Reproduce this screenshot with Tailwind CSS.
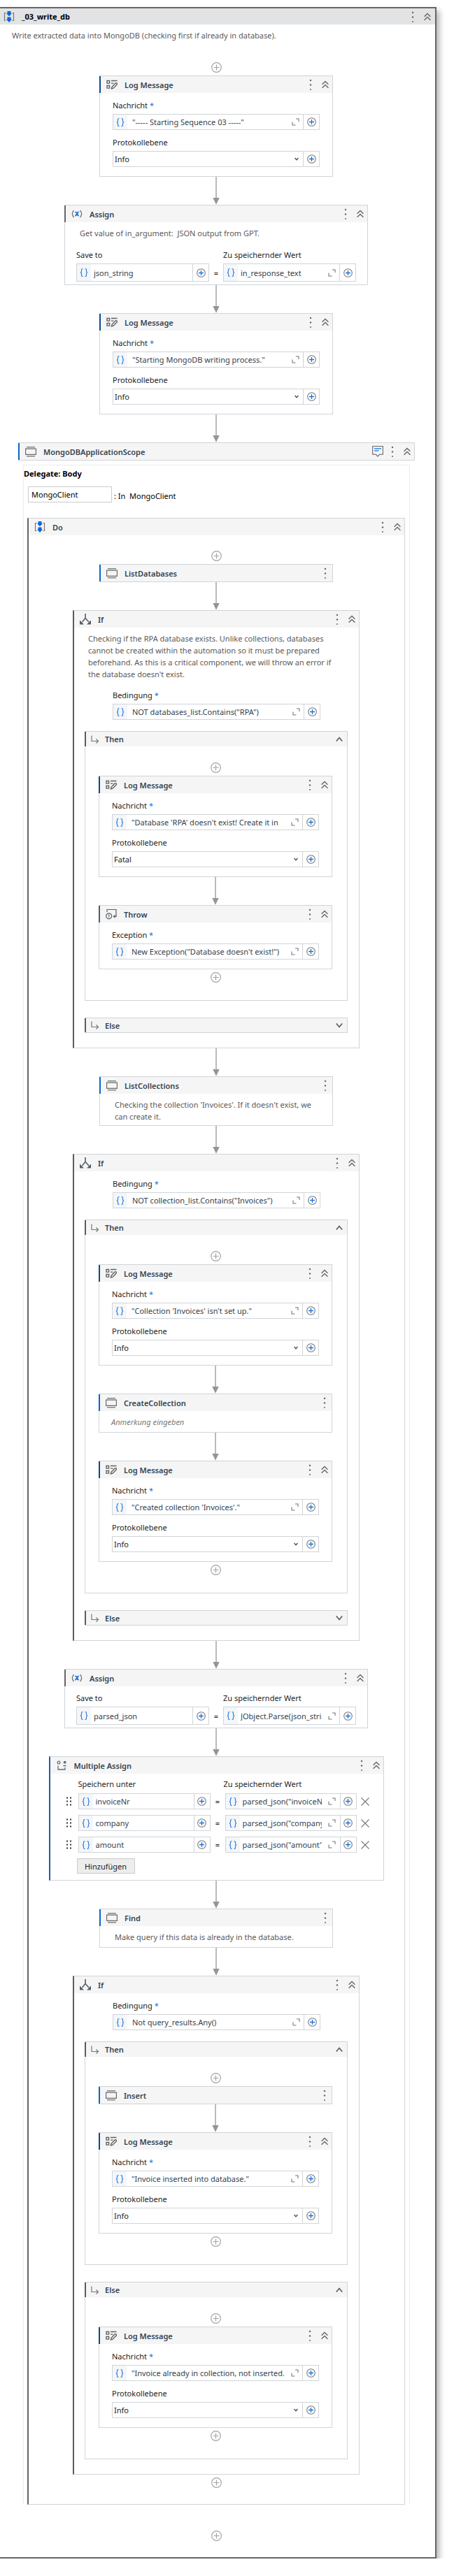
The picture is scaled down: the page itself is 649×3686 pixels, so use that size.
<!DOCTYPE html>
<html lang="de">
<head>
<meta charset="utf-8">
<meta name="viewport" content="width=device-width, initial-scale=1">
<title>_03_write_db</title>
<script src="https://cdn.jsdelivr.net/npm/@tailwindcss/browser@4"></script>
</head>
<body class="bg-white font-['Noto_Sans','Open_Sans',sans-serif] text-[11px] leading-[17px] text-[#222]">
<svg class="hidden" aria-hidden="true">
  <symbol id="i-seq" viewBox="0 0 16 16"><path d="M3.5 2.5H1.5v11h2M12.5 2.5h2v11h-2" fill="none" stroke="#777" stroke-width="1.2"/><path d="M5.5 0h5v3.200h1.500L8 7.300 4 3.200h1.500zM5.500 8.500h5v3h1.500L8 16l-4-4.500h1.500z" fill="#0b66d6"/></symbol>
  <symbol id="i-log" viewBox="0 0 16 16"><g fill="none" stroke="#616161" stroke-width="1.400"><path d="M1 2.500h3.600v3.600H1zM1 9.500h3.600v3.600H1zM7 2.500h8.500M7 6.100h3.500"/><path d="M7.500 14l.6-2.700 5-5.200q1-.8 1.900 0t.1 1.900l-5 5.200z"/></g></symbol>
  <symbol id="i-assign" viewBox="0 0 16 16"><path d="M3.500 3Q-.8 8 3.500 13M12.500 3q4.300 5 0 10" fill="none" stroke="#777" stroke-width="1.300"/><path d="M5.300 5.500h1.300q.8 0 2.800 5h1.300M10.700 5.500q-1.200-.3-2.700 2.500t-2.700 2.500" fill="none" stroke="#0b66d6" stroke-width="1.700"/></symbol>
  <symbol id="i-box" viewBox="0 0 16 16"><path d="M.6 4.200h14.800v8.100H.6z" fill="none" stroke="#6b6b6b" stroke-width="1.200"/><path d="M2 1.800h12M2 14.800h12" stroke="#858585" stroke-width="1.400"/></symbol>
  <symbol id="i-if" viewBox="0 0 16 16"><path d="M8 0v6.500L3.500 12M8 6.500l5 5.500" fill="none" stroke="#525e68" stroke-width="1.600"/><path d="M0 9.500v6h6zM16 9.500v6h-6z" fill="#525e68"/></symbol>
  <symbol id="i-throw" viewBox="0 0 16 16"><path d="M2 5V1.500h13v9.800h-3.500" fill="none" stroke="#59636b" stroke-width="1.200"/><path d="M13.500 8.700L10.500 11.300l3 2.600z" fill="#59636b"/><circle cx="4.700" cy="10.800" r="4" fill="none" stroke="#59636b" stroke-width="1.200"/><path d="M4.700 8.500v3M4.700 12.200v1" stroke="#59636b" stroke-width="1.300"/></symbol>
  <symbol id="i-multi" viewBox="0 0 16 16"><circle cx="4" cy="4" r="1.900" fill="none" stroke="#626c74" stroke-width="1.200"/><path d="M3 8.500v5.500h10V11M10.500 8.500h4" fill="none" stroke="#626c74" stroke-width="1.300"/><circle cx="12.700" cy="3.700" r="1.900" fill="#626c74"/></symbol>
  <symbol id="i-branch" viewBox="0 0 12 12"><path d="M1 .5v8h9.500M7.500 5.500l3 3-3 3" fill="none" stroke="#777" stroke-width="1.200"/></symbol>
  <symbol id="i-dots" viewBox="0 0 4 16"><circle cx="2" cy="2" r="1.200" fill="#666"/><circle cx="2" cy="8.500" r="1.200" fill="#666"/><circle cx="2" cy="15" r="1" fill="#666"/></symbol>
  <symbol id="i-up2" viewBox="0 0 10 12"><path d="M.6 5.700L5 1.500l4.400 4.200M.6 10.700L5 6.500l4.400 4.200" fill="none" stroke="#666" stroke-width="1.400"/></symbol>
  <symbol id="i-up" viewBox="0 0 10 8"><path d="M.8 6.500L5 1.500l4.200 5" fill="none" stroke="#5f5f5f" stroke-width="1.700"/></symbol>
  <symbol id="i-down" viewBox="0 0 10 8"><path d="M.8 1.500L5 6.500l4.200-5" fill="none" stroke="#5f5f5f" stroke-width="1.700"/></symbol>
  <symbol id="i-plus" viewBox="0 0 15 15"><circle cx="7.500" cy="7.500" r="6.800" fill="none" stroke="#a3a3a3" stroke-width="1.200"/><path d="M7.500 3.500v8M3.500 7.500h8" stroke="#a3a3a3" stroke-width="1.200"/></symbol>
  <symbol id="i-add" viewBox="0 0 13 13"><circle cx="6.500" cy="6.500" r="5.800" fill="none" stroke="#777" stroke-width="1.100"/><path d="M6.500 3v7M3 6.500h7" stroke="#1673e0" stroke-width="1.300"/></symbol>
  <symbol id="i-expand" viewBox="0 0 11 11"><path d="M6 1h4v4M1 5.500V10h4.500" fill="none" stroke="#777" stroke-width="1.100"/></symbol>
  <symbol id="i-caret" viewBox="0 0 6 5"><path d="M.6 1L3 3.800 5.400 1" fill="none" stroke="#444" stroke-width="1.300"/></symbol>
  <symbol id="i-brace" viewBox="0 0 12 14"><path d="M4.500 1.500Q2.500 1.500 2.500 3.300V5Q2.500 6.700 1 7q1.500.3 1.500 2v1.700q0 1.800 2 1.800M7.500 1.500q2 0 2 1.800V5q0 1.700 1.500 2-1.500.3-1.500 2v1.700q0 1.800-2 1.800" fill="none" stroke="#2f80e0" stroke-width="1.200"/></symbol>
  <symbol id="i-note" viewBox="0 0 16 16"><path d="M.7.7h14.600v11.500H10.500L8 15l-2.500-2.800H.7z" fill="#fff" stroke="#777" stroke-width="1.300"/><path d="M3 4h10M3 7h6.500" stroke="#2f80e0" stroke-width="1.600"/></symbol>
  <symbol id="i-x" viewBox="0 0 12 12"><path d="M.5.5l11 11M11.500.5l-11 11" stroke="#777" stroke-width="1.100"/></symbol>
  <symbol id="i-grip" viewBox="0 0 7 13"><g fill="#333"><path d="M0 .5h2v2H0zM5 .5h2v2H5zM0 5.500h2v2H0zM5 5.500h2v2H5zM0 10.500h2v2H0zM5 10.500h2v2H5z"/></g></symbol>
  <symbol id="i-arrow" viewBox="0 0 10 40"><path d="M5 0v31" stroke="#959595" stroke-width="1.300"/><path d="M.3 30h9.400L5 39.700z" fill="#959595"/></symbol>
</svg>
<main id="app"></main>
<script>
let n = 0;
const use = (id, cls) => `<svg class="${cls}" aria-hidden="true"><use href="#i-${id}"/></svg>`;
const esc = s => s.replace(/&/g, '&amp;').replace(/"/g, '&quot;');

const menu = `<button type="button" aria-label="Menü" class="flex w-4 justify-center">${use('dots', 'h-4 w-1')}</button>`;
const fold = `<button type="button" aria-label="Einklappen" class="flex w-4 items-center justify-center">${use('up2', 'h-3 w-2.5')}</button>`;
const head = (icon, title, accent, foldable = true, extra = '') => `
  <header class="-ml-px flex h-6 items-center border-l-2 ${accent} bg-[#f5f5f6] pr-0.5 pl-2">
    ${use(icon, 'size-4 shrink-0')}
    <h3 class="ml-2.5 grow font-semibold text-[#33424f]">${title}</h3>
    ${extra}<div class="flex gap-[5px]">${menu}${foldable ? fold : ''}</div>
  </header>`;

const add = `<button type="button" aria-label="Variable hinzufügen" class="flex w-[23px] shrink-0 items-center justify-center border-l border-[#d0d5da]">${use('add', 'size-[13px]')}</button>`;
const field = (id, value, { h = 'h-[23px]', gap = 'ml-[7px]', expand = true, label = '' } = {}) => `
  <div class="flex ${h} min-w-0 border border-[#d0d5da] bg-white">
    <span class="flex w-5 shrink-0 items-center justify-center bg-[#f4f6f8]">${use('brace', 'h-3.5 w-3')}</span>
    <input id="${id}" ${label ? `aria-label="${label}"` : ''} value="${esc(value)}" class="${gap} min-w-0 grow text-[#33424f] outline-none">
    ${expand ? `<button type="button" aria-label="Erweitern" class="flex w-[26px] shrink-0 items-center justify-center pl-1">${use('expand', 'size-[11px]')}</button>` : ''}
    ${add}
  </div>`;
const labelled = (label, value) => { const id = 'f' + ++n; return `
  <label for="${id}" class="mb-1 block">${label} <span class="text-[#1673e0]">*</span></label>${field(id, value)}`; };
const level = value => { const id = 'f' + ++n; return `
  <label for="${id}" class="mt-[9px] mb-1 block">Protokollebene</label>
  <div class="flex h-[23px] border border-[#d0d5da]">
    <div class="relative flex grow">
      <select id="${id}" class="grow appearance-none pl-0.5 outline-none"><option>${value}</option></select>
      ${use('caret', 'pointer-events-none absolute top-2 right-1.5 h-[5px] w-1.5')}
    </div>${add}
  </div>`; };

const card = inner => `<section class="w-[334px] max-w-full border border-[#d0d5d9] bg-white">${inner}</section>`;
const log = (msg, lvl = 'Info') => card(head('log', 'Log Message', 'border-l-[#0a4a8c]') +
  `<div class="px-[18px] pt-[9px] pb-[13px]">${labelled('Nachricht', msg)}${level(lvl)}</div>`);
const thrown = msg => card(head('throw', 'Throw', 'border-l-[#525e68]') +
  `<div class="px-[18px] pt-[9px] pb-[13px]">${labelled('Exception', msg)}</div>`);
const custom = (title, note = '') => card(head('box', title, 'border-l-[#0b66c8]', false) + note);
const note = text => `<p class="min-h-[30px] pt-[7px] pr-4 pb-1 pl-[21px] text-[#5a5a5a]">${text}</p>`;
const hint = `<p class="min-h-[30px] px-[17px] pt-[7px] text-[#777] italic">Anmerkung eingeben</p>`;

const assign = (to, value, text = '') => { const a = 'f' + ++n, b = 'f' + ++n; return `
  <section class="w-[434px] max-w-full border border-[#d0d5d9] bg-white">
    ${head('assign', 'Assign', 'border-l-[#666]')}
    ${text ? `<p class="h-[30px] pt-[7px] pl-[21px] text-[#5a5a5a]">${text}</p>` : ''}
    <div class="grid grid-cols-[1fr_20px_1fr] items-center px-4 pt-2 pb-1">
      <label for="${a}" class="mb-1">Save to</label><span></span><label for="${b}" class="mb-1">Zu speichernder Wert</label>
      ${field(a, to, { h: 'h-[26px]', gap: 'ml-1', expand: false })}
      <span class="text-center">=</span>
      ${field(b, value, { h: 'h-[26px]', gap: 'ml-1' })}
    </div>
  </section>`; };

const multiRow = (to, value) => `
  <div class="grid grid-cols-[17px_189px_21px_188px_1fr] items-center">
    ${use('grip', 'h-[13px] w-[7px]')}
    ${field('f' + ++n, to, { gap: 'ml-1', expand: false, label: 'Speichern unter' })}
    <span class="text-center">=</span>
    ${field('f' + ++n, value, { gap: 'ml-1', label: 'Zu speichernder Wert' })}
    <button type="button" aria-label="Zeile entfernen" class="ml-1.5">${use('x', 'size-3')}</button>
  </div>`;
const multi = rows => `
  <section class="w-[479px] max-w-full border border-l-2 border-[#d0d5d9] border-l-[#1a5fa8] bg-white [&>header]:-ml-0.5">
    ${head('multi', 'Multiple Assign', 'border-l-[#1a5fa8]')}
    <div class="pr-2 pb-[9px] pl-[23px]">
      <div class="grid grid-cols-[17px_208px_1fr] pt-1.5 pb-[5px]"><span></span><span>Speichern unter</span><span>Zu speichernder Wert</span></div>
      <div class="flex flex-col gap-2">${rows.map(r => multiRow(...r)).join('')}</div>
      <button type="button" class="mt-2 ml-[15px] flex h-[22px] w-[83px] items-center justify-center border border-[#ccc] bg-[#ededee]">Hinzufügen</button>
    </div>
  </section>`;

const plus = `<button type="button" aria-label="Aktivität hinzufügen" class="my-1 block">${use('plus', 'size-[15px]')}</button>`;
const arrow = use('arrow', 'h-10 w-2.5 shrink-0');
const list = items => plus + items.join(arrow) + plus;

const branch = (title, items) => `
  <section class="mr-4 ml-[15px] border border-[#d0d5d9]">
    <header class="-ml-px flex ${items ? 'h-[21px]' : 'h-5'} items-center border-l-2 border-l-[#525e68] bg-[#f5f5f6] pr-1.5 pl-[7px]">
      ${use('branch', 'size-3')}
      <h4 class="ml-2 grow font-semibold text-[#33424f]">${title}</h4>
      <button type="button" aria-label="${title} umschalten">${use(items ? 'up' : 'down', 'h-2 w-2.5')}</button>
    </header>
    ${items ? `<div class="flex flex-col items-center pt-[19px] pr-0.5 pb-[21px]">${list(items)}</div>` : ''}
  </section>`;
const cond = (text, expr, yes, no) => `
  <section class="w-[410px] max-w-full border border-l-2 border-[#d0d5d9] border-l-[#525e68] bg-white pb-[21px] [&>header]:-ml-0.5">
    ${head('if', 'If', 'border-l-[#525e68]')}
    ${text ? `<p class="pt-[7px] pr-6 pb-1 pl-5 text-[#5a5a5a]">${text}</p>` : ''}
    <div class="px-[55px] pt-[9px] pb-4">${labelled('Bedingung', expr)}</div>
    ${branch('Then', yes)}
    <div class="h-6"></div>
    ${branch('Else', no)}
  </section>`;

const body = [
  custom('ListDatabases'),
  cond("Checking if the RPA database exists. Unlike collections, databases cannot be created within the automation so it must be prepared beforehand. As this is a critical component, we will throw an error if the database doesn't exist.",
    'NOT databases_list.Contains("RPA")',
    [log("\"Database 'RPA' doesn't exist! Create it in", 'Fatal'), thrown('New Exception("Database doesn\'t exist!")')]),
  custom('ListCollections', note("Checking the collection 'Invoices'. If it doesn't exist, we can create it.")),
  cond('', 'NOT collection_list.Contains("Invoices")',
    [log("\"Collection 'Invoices' isn't set up.\""), custom('CreateCollection', hint), log("\"Created collection 'Invoices'.\"")]),
  assign('parsed_json', 'JObject.Parse(json_string)'),
  multi([['invoiceNr', 'parsed_json("invoiceNr")'], ['company', 'parsed_json("company")'], ['amount', 'parsed_json("amount")']]),
  custom('Find', note('Make query if this data is already in the database.')),
  cond('', 'Not query_results.Any()',
    [custom('Insert'), log('"Invoice inserted into database."')],
    [log('"Invoice already in collection, not inserted."')])
];

const scope = `
  <section class="w-full pr-[25px] pb-[33px] pl-[26px]">
    <div class="border border-[#d0d5d9]">${head('box', 'MongoDBApplicationScope', 'border-l-[#0b66c8]', true, use('note', 'mr-[5px] size-4'))}</div>
    <div class="mx-[7px] mt-1.5 border border-b-0 border-[#e9edef]">
      <h3 class="pt-[3px] font-bold text-black">Delegate: Body</h3>
      <div class="mt-[10px] flex h-[23px] items-center pl-1.5 text-black">
        <input aria-label="Argument" value="MongoClient" class="mr-[3px] h-[23px] w-[120px] border border-[#ccc] pl-1 outline-none">
        <span class="pt-1 whitespace-pre">: In  MongoClient</span>
      </div>
      <section class="mt-[22px] mr-1.5 ml-[5px] border border-l-2 border-[#d0d5d9] border-l-[#666] [&>header]:-ml-0.5">
        ${head('seq', 'Do', 'border-l-[#666]')}
        <div class="flex flex-col items-center pt-[18px] pr-px pb-[19px]">${list(body)}</div>
      </section>
    </div>
  </section>`;

document.getElementById('app').innerHTML = `
  <article class="mt-2.5 mr-[25px] border-y-2 border-r-2 border-[#666] bg-white shadow-[4px_5px_8px_rgba(0,0,0,0.3)]">
    <header class="flex h-[23px] items-center bg-[#e2e3e5] pr-[3px] pl-[5px]">
      ${use('seq', 'size-4')}
      <h1 class="ml-2.5 grow font-bold text-black">_03_write_db</h1>
      <div class="flex gap-[5px]">${menu}${fold}</div>
    </header>
    <p class="pt-[7px] pl-[17px] text-[#5a5a5a]">Write extracted data into MongoDB (checking first if already in database).</p>
    <div class="flex flex-col items-center pt-[26px] pr-1 pb-[19px]">
      ${list([
        log('"----- Starting Sequence 03 -----"'),
        assign('json_string', 'in_response_text', 'Get value of in_argument:&nbsp; JSON output from GPT.'),
        log('"Starting MongoDB writing process."'),
        scope
      ])}
    </div>
  </article>`;
</script>
</body>
</html>
